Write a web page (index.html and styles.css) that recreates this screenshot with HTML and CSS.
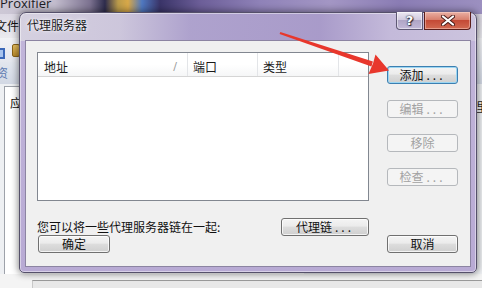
FILE: index.html
```html
<!DOCTYPE html>
<html lang="zh-CN">
<head>
<meta charset="utf-8">
<title>代理服务器</title>
<link rel="stylesheet" href="styles.css">
</head>
<body>
<div class="desktop">
  <div class="bgwin">
    <div class="bg-title">Proxifier</div>
    <div class="bg-menu">文件(F)</div>
    <div class="bg-toolbar"><span class="tb-icon tb-blue"></span><span class="tb-icon tb-yellow"></span></div>
    <div class="bg-tab">资</div>
    <div class="bg-body">
      <div class="bg-panel">应用</div>
      <div class="bg-right">里</div>
    </div>
    <div class="bg-status"><div class="bg-status-line"></div></div>
  </div>

  <div class="dialog">
    <div class="titlebar">
      <div class="title">代理服务器</div>
      <div class="caption">
        <div class="cap-help">?</div>
        <div class="cap-close">
          <svg width="14" height="11" viewBox="0 0 14 11"><path d="M2 1.5 L12 9.5 M12 1.5 L2 9.5" stroke="#4a1c18" stroke-width="4" stroke-linecap="round"/><path d="M2 1.5 L12 9.5 M12 1.5 L2 9.5" stroke="#ffffff" stroke-width="2.2" stroke-linecap="round"/></svg>
        </div>
      </div>
    </div>
    <div class="client">
      <div class="leftcol">
        <div class="listbox">
          <div class="lv-header">
            <div class="lv-col lv-addr"><span>地址</span><span class="sort">/</span></div>
            <div class="lv-col lv-port">端口</div>
            <div class="lv-col lv-type">类型</div>
            <div class="lv-col lv-rest"></div>
          </div>
        </div>
        <div class="chainrow">
          <span class="chaintext">您可以将一些代理服务器链在一起:</span>
          <button class="btn btn-chain">代理链<span class="dots">...</span></button>
        </div>
        <button class="btn btn-ok">确定</button>
      </div>
      <div class="rightcol">
        <button class="btn btn-default">添加<span class="dots">...</span></button>
        <button class="btn" disabled>编辑<span class="dots">...</span></button>
        <button class="btn" disabled>移除</button>
        <button class="btn" disabled>检查<span class="dots">...</span></button>
        <button class="btn btn-cancel">取消</button>
      </div>
    </div>
  </div>

  <svg class="arrow" width="482" height="288" viewBox="0 0 482 288">
    <polygon points="280.3,32.1 279.6,34 371.4,66.6 372.9,61.4" fill="#e8372c"/>
    <polygon points="389,70.5 375.5,54.5 373,63.5 368.5,74" fill="#e8372c"/>
  </svg>
</div>
</body>
</html>
```

FILE: styles.css
```css
* { box-sizing: border-box; }
html, body { margin: 0; padding: 0; }
body {
  width: 482px;
  height: 288px;
  overflow: hidden;
  font-family: "Noto Sans CJK SC", "Noto Sans", sans-serif;
  font-size: 12px;
  color: #1a1a1a;
}
.desktop {
  position: relative;
  width: 482px;
  height: 288px;
  overflow: hidden;
  background: #f0f0f0;
}

/* background window */
.bgwin {
  position: absolute;
  left: 0; top: 0;
  width: 482px; height: 288px;
  display: flex;
  flex-direction: column;
}
.bg-title {
  height: 14px;
  flex: none;
  background: linear-gradient(90deg, #cdc8d6 0, #c2bccd 55px, #7c7290 90px, #2e2c4c 105px, #b99a4a 118px, #d8a848 128px, #4f78c0 142px, #3a3468 160px, #6c5e98 200px, #8f82b8 260px, #a396c4 330px, #8a7cb4 400px, #9c90c0 482px);
  font-family: "Open Sans", "Liberation Sans", sans-serif;
  font-size: 13px;
  line-height: 7px;
  color: #1c1c24;
  white-space: nowrap;
}
.bg-menu {
  height: 24px;
  flex: none;
  background: linear-gradient(180deg, #dcd8e4, #ebebef);
  text-indent: -5px;
  line-height: 24px;
  font-size: 12px;
  white-space: nowrap;
  color: #111;
}
.bg-toolbar {
  height: 24px;
  flex: none;
  background: linear-gradient(180deg, #f2f3f6, #e4e7ee);
  display: flex;
  align-items: center;
  gap: 7px;
  margin-left: -2px;
}
.tb-icon { display: block; flex: none; }
.tb-blue {
  width: 7px; height: 11px;
  border: 2px solid #3b68b8;
  background: #a8c4ee;
  margin-top: 6px;
}
.tb-yellow {
  width: 8px; height: 13px;
  background: linear-gradient(180deg, #e8c060, #b88a2a);
  border: 1px solid #8a6418;
  border-radius: 2px;
}
.bg-tab {
  height: 22px;
  flex: none;
  background: linear-gradient(180deg, #e2e6ee, #d2d8e4);
  text-indent: -4px;
  line-height: 22px;
  color: #5a78b0;
  white-space: nowrap;
}
.bg-body {
  flex: 1;
  display: flex;
  justify-content: space-between;
  background: #eef0f3;
  padding-left: 4px;
  padding-top: 2px;
}
.bg-panel {
  width: 300px;
  background: #ffffff;
  border-left: 1px solid #9ea2aa;
  border-top: 1px solid #9ea2aa;
  padding-left: 5px;
  padding-top: 9px;
  line-height: 14px;
  white-space: nowrap;
  color: #111;
}
.bg-right {
  margin-right: -6px;
  padding-top: 14px;
  line-height: 14px;
  color: #222;
}
.bg-status {
  height: 14px;
  flex: none;
  background: #f4f4f4;
  padding-top: 6px;
  padding-left: 32px;
}
.bg-status-line {
  height: 8px;
  border-top: 1px solid #9a9a9a;
  border-left: 1px solid #c8c8c8;
  background: #e8e8e8;
}

/* dialog */
.dialog {
  position: absolute;
  left: 19px;
  top: 12px;
  width: 458px;
  height: 261px;
  border: 1px solid #55506a;
  border-radius: 7px 7px 5px 5px;
  background:
    linear-gradient(90deg, rgba(214,210,224,0.95) 0, rgba(206,200,220,0.9) 100px, rgba(172,160,204,0.9) 170px, rgba(166,152,200,0.9) 300px, rgba(196,186,218,0.95) 370px, rgba(204,196,222,1) 100%) top / 100% 28px no-repeat,
    linear-gradient(180deg, #c2b6da 0, #b8aad4 100%);
  box-shadow: 0 0 7px 1px rgba(0,0,0,0.45), inset 0 0 0 1px rgba(255,255,255,0.45);
  display: flex;
  flex-direction: column;
  padding: 0 5px 5px 5px;
}
.titlebar {
  height: 27px;
  flex: none;
  display: flex;
  justify-content: space-between;
  align-items: flex-start;
}
.title {
  margin-left: 2px;
  padding-top: 6px;
  line-height: 12px;
  font-size: 12px;
  color: #1a1a22;
  text-shadow: 0 0 5px rgba(255,255,255,0.9), 0 0 2px rgba(255,255,255,0.9);
  white-space: nowrap;
}
.caption {
  display: flex;
  margin-top: -1px;
  gap: 1px;
}
.cap-help {
  width: 27px;
  height: 18px;
  border: 1px solid #5e5874;
  border-top: none;
  border-radius: 0 0 0 4px;
  background: linear-gradient(180deg, #ece8f2 0, #d2cbe0 45%, #b0a6c6 50%, #c2b8d8 100%);
  box-shadow: inset 0 0 0 1px rgba(255,255,255,0.5);
  color: #ffffff;
  font-family: "DejaVu Sans", sans-serif;
  font-weight: bold;
  font-size: 13px;
  line-height: 17px;
  text-align: center;
  text-shadow: 0 0 1px #2a2838, 0 0 2px #2a2838, 1px 1px 1px #2a2838;
}
.cap-close {
  width: 47px;
  height: 18px;
  border: 1px solid #5a1e1a;
  border-top: none;
  border-radius: 0 0 4px 0;
  background: linear-gradient(180deg, #eab0a4 0, #d8806e 45%, #c44a36 50%, #d26a52 100%);
  box-shadow: inset 0 0 0 1px rgba(255,220,210,0.45);
  display: flex;
  align-items: center;
  justify-content: center;
}

.client {
  flex: 1;
  background: #f0f0f0;
  border: 1px solid #8c84a2;
  display: flex;
  gap: 18px;
  padding: 11px 12px 13px 11px;
}
.leftcol {
  width: 332px;
  display: flex;
  flex-direction: column;
}
.listbox {
  height: 149px;
  flex: none;
  border: 1px solid #828790;
  background: #ffffff;
}
.lv-header {
  display: flex;
  height: 24px;
  border-bottom: 1px solid #d5d5d5;
  background: linear-gradient(180deg, #ffffff 0, #ffffff 50%, #f5f6f7 100%);
}
.lv-col {
  height: 23px;
  border-right: 1px solid #e3e5e8;
  padding-left: 5px;
  padding-top: 7px;
  line-height: 14px;
  white-space: nowrap;
  color: #1a1a1a;
}
.lv-addr {
  width: 150px;
  padding-left: 6px;
  padding-right: 10px;
  display: flex;
  justify-content: space-between;
}
.sort { color: #9a9a9a; font-family: "DejaVu Sans", sans-serif; font-size: 11px; }
.lv-port { width: 70px; }
.lv-type { width: 81px; }
.lv-rest { flex: 1; border-right: none; }

.chainrow {
  margin-top: 17px;
  height: 18px;
  flex: none;
  display: flex;
  justify-content: space-between;
  align-items: center;
}
.chaintext {
  white-space: nowrap;
  line-height: 14px;
  color: #111;
}

.btn {
  height: 18px;
  flex: none;
  margin: 0;
  padding: 0;
  border: 1px solid #707070;
  border-radius: 3px;
  background: linear-gradient(180deg, #f4f4f4 0, #ebebeb 45%, #dddddd 50%, #cfcfcf 100%);
  box-shadow: inset 0 0 0 1px rgba(255,255,255,0.75);
  font-family: "Noto Sans CJK SC", "Noto Sans", sans-serif;
  font-size: 12px;
  line-height: 14px;
  color: #111;
  text-align: center;
  white-space: nowrap;
}
.dots { letter-spacing: 3px; margin-left: 3px; }
.btn-chain { width: 88px; }
.btn-ok { width: 72px; margin-top: -1px; margin-left: 1px; }
.btn-default {
  border-color: #3c7fb1;
  box-shadow: inset 0 0 0 1px #9cd6f2;
}
.btn:disabled {
  border-color: #b5b8bc;
  background: #f4f4f4;
  box-shadow: none;
  color: #a2a2a2;
}
.rightcol {
  width: 71px;
  display: flex;
  flex-direction: column;
  gap: 16px;
  padding-top: 14px;
}
.rightcol .btn { width: 71px; }
.btn-cancel { margin-top: auto; }

.arrow {
  position: absolute;
  left: 0;
  top: 0;
  pointer-events: none;
}
```
